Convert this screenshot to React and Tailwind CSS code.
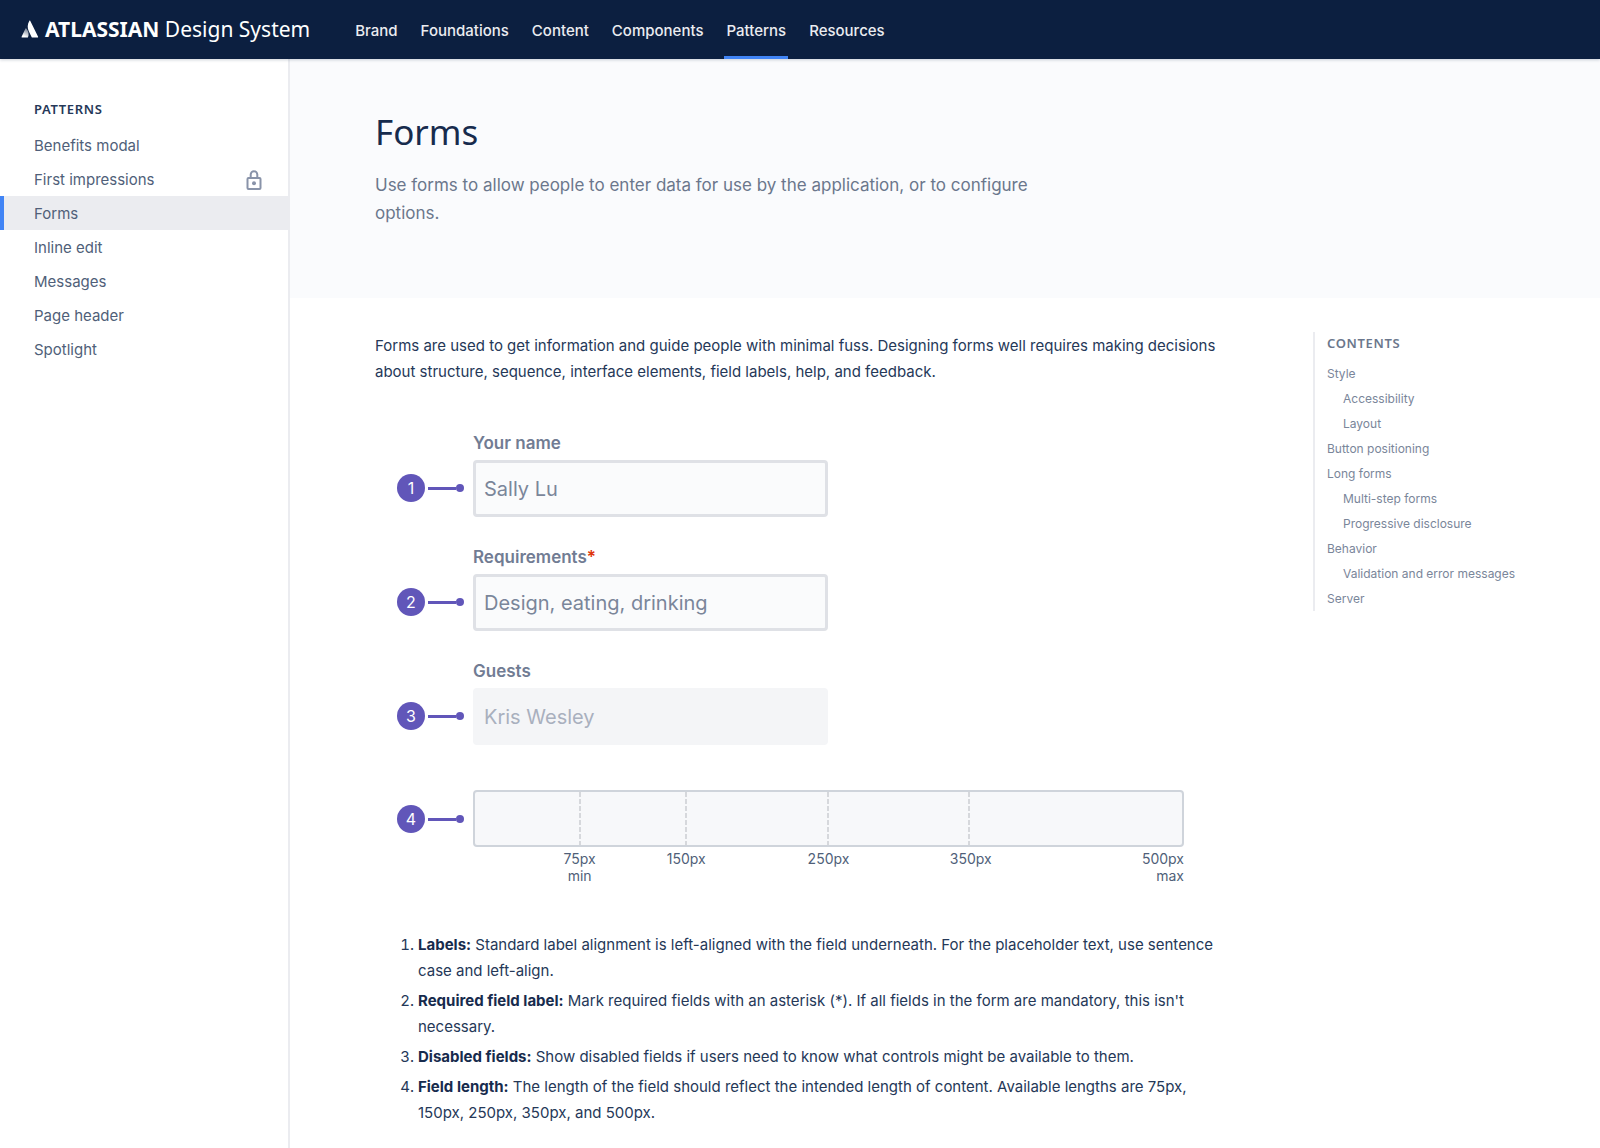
import React from "react";

const NAV = ["Brand", "Foundations", "Content", "Components", "Patterns", "Resources"];

const SIDE = [
  { label: "Benefits modal" },
  { label: "First impressions", locked: true },
  { label: "Forms", active: true },
  { label: "Inline edit" },
  { label: "Messages" },
  { label: "Page header" },
  { label: "Spotlight" },
];

const CONTENTS = [
  { label: "Style" },
  { label: "Accessibility", nested: true },
  { label: "Layout", nested: true },
  { label: "Button positioning" },
  { label: "Long forms" },
  { label: "Multi-step forms", nested: true },
  { label: "Progressive disclosure", nested: true },
  { label: "Behavior" },
  { label: "Validation and error messages", nested: true },
  { label: "Server" },
];

const NOTES = [
  {
    term: "Labels:",
    text: "Standard label alignment is left-aligned with the field underneath. For the placeholder text, use sentence case and left-align.",
  },
  {
    term: "Required field label:",
    text: "Mark required fields with an asterisk (*). If all fields in the form are mandatory, this isn't necessary.",
  },
  {
    term: "Disabled fields:",
    text: "Show disabled fields if users need to know what controls might be available to them.",
  },
  {
    term: "Field length:",
    text: "The length of the field should reflect the intended length of content. Available lengths are 75px, 150px, 250px, 350px, and 500px.",
  },
];

function Logo() {
  return (
    <svg className="size-[18px] shrink-0" viewBox="0 0 18 18" aria-hidden="true">
      <defs>
        <linearGradient id="peak" x1="7" y1="9" x2="3" y2="16" gradientUnits="userSpaceOnUse">
          <stop offset="0" stopColor="#fff" stopOpacity="0.4" />
          <stop offset="1" stopColor="#fff" />
        </linearGradient>
      </defs>
      <path
        fill="url(#peak)"
        d="M5.3 8.4c-.25-.3-.6-.25-.8.1L.6 16.7c-.2.4.05.8.5.8h5.4c.2 0 .4-.1.5-.3 1.3-2.6.5-6.5-1.7-8.8z"
      />
      <path
        fill="#fff"
        d="M8.4 .8C6.200 4.200 6.300 8.300 7.800 11.300l2.900 5.900c.1.2.3.3.5.3h5.400c.45 0 .7-.4.5-.8L9.200 .8c-.2-.35-.6-.35-.8 0z"
      />
    </svg>
  );
}

function LockIcon() {
  return (
    <svg
      className="h-5 w-4"
      viewBox="0 0 16 20"
      fill="none"
      stroke="#8993a9"
      strokeWidth="2"
      role="img"
      aria-label="Restricted"
    >
      <rect x="1.5" y="8" width="13" height="11" rx="1" />
      <path d="M4.700 8V4.500a3.300 3.300 0 0 1 6.600 0V8" />
      <circle cx="8" cy="13.300" r="2" fill="#8993a9" stroke="none" />
    </svg>
  );
}

function Callout({ n }) {
  return (
    <div className="flex h-[58px] w-[76px] shrink-0 items-center">
      <span className="flex size-7 items-center justify-center rounded-full bg-[#6156b9] text-base text-white">
        {n}
      </span>
      <span className="ml-[3px] h-[3px] w-7 bg-[#6156b9]" />
      <span className="size-2 rounded-full bg-[#6156b9]" />
    </div>
  );
}

function Field({ n, id, label, value, required, disabled }) {
  return (
    <div className="flex items-end">
      <Callout n={n} />
      <div className="flex w-[355px] flex-col gap-[5px]">
        <label htmlFor={id} className="text-[17px] leading-6 font-semibold text-[#717c93]">
          {label}
          {required && <span className="text-[#de350b]">*</span>}
        </label>
        <input
          id={id}
          type="text"
          defaultValue={value}
          disabled={disabled}
          className="h-[57px] w-full rounded border-[3px] border-[#dfe1e6] bg-[#fafbfc] px-2 text-xl text-[#7a869a] disabled:border-[#f4f5f7] disabled:bg-[#f4f5f7] disabled:text-[#a9b0be]"
        />
      </div>
    </div>
  );
}

function LengthScale() {
  return (
    <div className="flex items-start">
      <Callout n={4} />
      <div className="flex-1">
        <div className="grid h-[57px] grid-cols-[15fr_15fr_20fr_20fr_30fr] rounded border-2 border-[#cfd4db] bg-[#f7f8fa]">
          {[75, 150, 250, 350].map((v) => (
            <div key={v} className="flex justify-end">
              <div className="w-0.5 bg-[repeating-linear-gradient(to_bottom,#d6d8dc_0px,#d6d8dc_5px,transparent_5px,transparent_7px)]" />
            </div>
          ))}
        </div>
        <div className="grid grid-cols-[15fr_30fr_30fr_50fr_30fr_45fr] pt-[3px] text-center text-sm leading-[17px] text-[#505f79]">
          <span />
          <span>75px<br />min</span>
          <span>150px</span>
          <span>250px</span>
          <span>350px</span>
          <span className="text-right">500px<br />max</span>
        </div>
      </div>
    </div>
  );
}

export default function App() {
  return (
    <div className="flex min-h-screen flex-col bg-white font-['Inter',sans-serif] text-[#253858]">
      <header className="z-10 flex h-[59px] items-center bg-[#0c1f40] pl-[21px] shadow-[0_1px_3px_rgba(9,30,66,0.2)]">
        <a href="#home" className="flex items-center gap-1.5 pb-0.5 font-['Noto_Sans',sans-serif] text-[21px] leading-7 text-white">
          <Logo />
          <span className="whitespace-nowrap">
            <b>ATLASSIAN</b> Design System
          </span>
        </a>
        <nav className="flex h-full gap-[19px] pl-[43px]" aria-label="Main">
          {NAV.map((item) => (
            <a
              key={item}
              href={"#" + item.toLowerCase()}
              className={
                "flex items-center border-b-[3px] px-0.5 pt-1.5 text-[15px] font-medium text-[#ebecf0] " +
                (item === "Patterns" ? "border-[#4184f5]" : "border-transparent")
              }
            >
              {item}
            </a>
          ))}
        </nav>
      </header>

      <div className="flex flex-1">
        <aside className="w-[290px] shrink-0 border-r-2 border-[#ebecf0] pt-10">
          <h2 className="pl-[34px] font-['Noto_Sans',sans-serif] text-[13px] leading-5 font-semibold tracking-wider text-[#253858]">
            PATTERNS
          </h2>
          <nav className="pt-[9px]" aria-label="Patterns">
            {SIDE.map((item) => (
              <a
                key={item.label}
                href={"#" + item.label.toLowerCase().replace(" ", "-")}
                className={
                  "flex h-[34px] items-center justify-between border-l-4 pt-0.5 pr-[26px] pl-[30px] text-[15px] text-[#505f79] " +
                  (item.active ? "border-[#4184f5] bg-[#ebecf0]" : "border-transparent")
                }
              >
                {item.label}
                {item.locked && <LockIcon />}
              </a>
            ))}
          </nav>
        </aside>

        <main className="min-w-0 flex-1">
          <section className="h-[239px] bg-[#fafbfd] pt-[49px] pl-[85px]">
            <h1 className="font-['Noto_Sans',sans-serif] text-[35px] leading-[48px] text-[#172b4d]">Forms</h1>
            <p className="max-w-[680px] pt-[15px] text-[17px] leading-7 text-[#6b778c]">
              Use forms to allow people to enter data for use by the application, or to configure options.
            </p>
          </section>

          <div className="flex items-start justify-between pl-[85px]">
            <article className="max-w-[854px] flex-1 pt-[35px] text-[15px] leading-[26px]">
              <p>
                Forms are used to get information and guide people with minimal fuss. Designing forms well requires
                making decisions about structure, sequence, interface elements, field labels, help, and feedback.
              </p>
              <div className="flex flex-col gap-7 pt-[46px] pr-[45px] pl-[22px]">
                <Field n={1} id="name" label="Your name" value="Sally Lu" />
                <Field n={2} id="requirements" label="Requirements" value="Design, eating, drinking" required />
                <Field n={3} id="guests" label="Guests" value="Kris Wesley" disabled />
                <div className="pt-[17px]">
                  <LengthScale />
                </div>
              </div>
              <ol className="flex list-decimal flex-col gap-1 pt-12 pl-[43px]">
                {NOTES.map((note) => (
                  <li key={note.term}>
                    <b className="font-bold text-[#172b4d]">{note.term}</b> {note.text}
                  </li>
                ))}
              </ol>
            </article>

            <nav
              className="mt-[34px] w-[287px] shrink-0 border-l-2 border-[#ebecf0] pl-3 text-xs text-[#7a869a]"
              aria-label="Contents"
            >
              <h2 className="pb-[7px] font-['Noto_Sans',sans-serif] text-[13px] leading-[22px] font-semibold tracking-wider text-[#6b778c]">
                CONTENTS
              </h2>
              <ul>
                {CONTENTS.map((item) => (
                  <li key={item.label} className={"leading-[25px] " + (item.nested ? "pl-4" : "")}>
                    <a href={"#" + item.label.toLowerCase()}>{item.label}</a>
                  </li>
                ))}
              </ul>
            </nav>
          </div>
        </main>
      </div>
    </div>
  );
}
